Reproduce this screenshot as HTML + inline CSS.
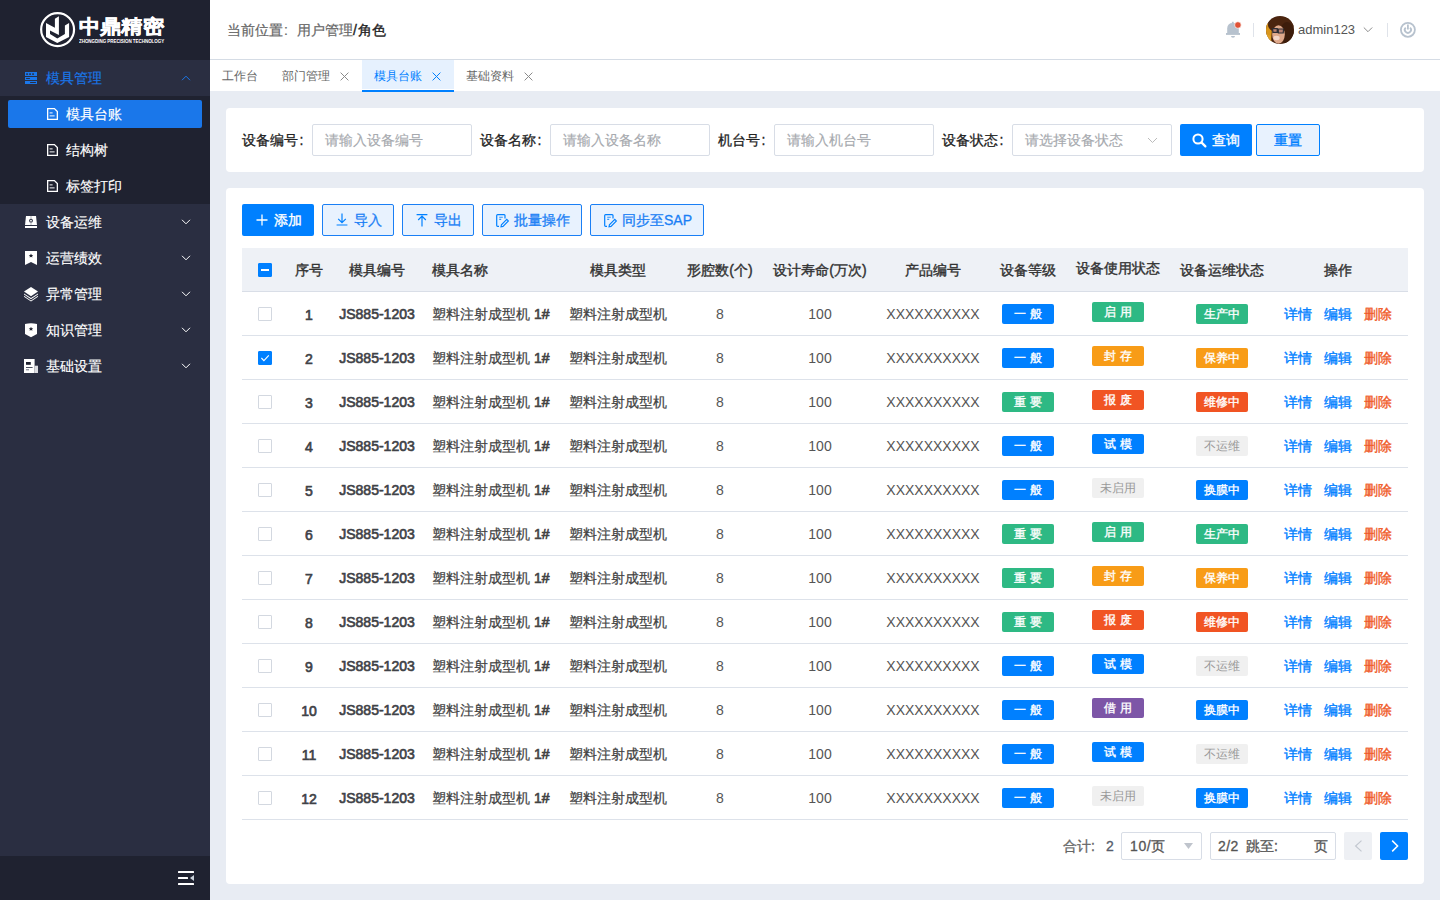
<!DOCTYPE html>
<html><head><meta charset="utf-8"><title>模具台账</title><style>
*{margin:0;padding:0;box-sizing:border-box}
html,body{width:1440px;height:900px;overflow:hidden}
body{font-family:"Liberation Sans",sans-serif;background:#e8ecf3;position:relative;font-size:14px;color:#333}
.a{position:absolute}
svg{display:block}
#side{left:0;top:0;width:210px;height:900px;background:#2a2e41}
#logo{left:0;top:0;width:210px;height:60px;background:#1f2230}
.mi{position:absolute;left:0;width:210px;height:36px;color:#fff;font-size:14px;line-height:36px;white-space:nowrap}
.mi .t{position:absolute;left:46px;top:0;-webkit-text-stroke:0.15px currentColor}
.mi svg.ic{position:absolute;left:25px;top:12px}
.mi svg.ch{position:absolute;left:180px;top:14px}
.sub{background:#1f2230}
.sub .t{left:66px}
.sub svg.ic{left:46.5px;top:11.5px}
#hdr{left:210px;top:0;width:1230px;height:60px;background:#fff;border-bottom:1px solid #d5dce5}
#tabs{left:210px;top:60px;width:1230px;height:31px;background:#fff}
.tab{position:absolute;top:1px;height:31px;line-height:31px;font-size:12px;color:#666;white-space:nowrap}
.card{position:absolute;background:#fff;border-radius:4px}
.lbl{position:absolute;top:124px;height:32px;line-height:32px;color:#222;-webkit-text-stroke:0.28px #222;white-space:nowrap}
.inp{position:absolute;top:124px;height:32px;width:160px;border:1px solid #d8dde6;border-radius:2px;line-height:30px;padding-left:12px;color:#a6a9ae;font-size:14px;-webkit-text-stroke:0.15px currentColor;white-space:nowrap}
.btn{position:absolute;top:204px;height:32px;line-height:30px;border:1px solid #1a7ff5;background:#e8f2fe;color:#1a7ff5;border-radius:2px;font-size:14px;-webkit-text-stroke:0.3px currentColor;white-space:nowrap}
.btn svg{position:absolute;top:9px}
.btn .t{position:absolute;top:0}
#thead{left:242px;top:248px;width:1166px;height:44px;background:#eef1f6;border-bottom:1px solid #d9dee7}
.th{position:absolute;top:1px;line-height:43px;color:#333;-webkit-text-stroke:0.4px #333;white-space:nowrap;transform:translateX(-50%)}
.tr{position:absolute;left:242px;width:1166px;height:44px;border-bottom:1px solid #dde2ea}
.td{position:absolute;top:1px;line-height:43px;white-space:nowrap;transform:translateX(-50%);color:#444}
.cb{position:absolute;left:16px;top:15px;width:14px;height:14px;border:1px solid #d3d8e0;border-radius:1px;background:#fff}
.tag{position:absolute;width:52px;height:20px;line-height:20px;border-radius:2px;color:#fff;font-size:12px;text-align:center;-webkit-text-stroke:0.35px currentColor}
.g{background:#2eb984}.b{background:#0080ff}.o{background:#f89c17}.r{background:#f15423}.p{background:#7d56a7}.x{background:#f0f0f0;color:#999;-webkit-text-stroke:0}
.md{-webkit-text-stroke:0.22px #444}
.op{position:absolute;top:1px;line-height:43px;color:#0080ff;-webkit-text-stroke:0.35px currentColor;white-space:nowrap}
</style></head><body>
<div id="side" class="a">
<div id="logo" class="a"><svg class="a" style="left:38px;top:10px" width="40" height="40" viewBox="0 0 40 40"><circle cx="19.6" cy="19.6" r="16.45" fill="none" stroke="#fff" stroke-width="2.2"/><path d="M8 13.1 L16.9 17.8 V8.7 L20.9 6.2 V24.9 L12 20.4 V24 L19.3 28.4 L26.9 24 V15.5 L31.1 13.1 V26.9 L19.3 33.1 L8 26.9 Z" fill="#fff"/></svg><div class="a" style="left:79px;top:14px;font-size:21px;font-weight:bold;color:#fff;letter-spacing:0.2px;line-height:26px;-webkit-text-stroke:0.6px #fff;transform:scaleY(0.9);transform-origin:0 13px">中鼎精密</div><div class="a" style="left:79px;top:38px;font-size:5px;font-weight:bold;color:#fff;line-height:6px;letter-spacing:-0.05px;white-space:nowrap;transform:scaleX(0.9);transform-origin:0 0">ZHONGDING PRECISION TECHNOLOGY</div></div>
<div class="mi" style="top:60px;color:#1a77ea"><svg class="ic" width="12" height="12" viewBox="0 0 12 12" fill="#1a77ea"><rect x="0" y="0" width="12" height="4"/><rect x="0" y="5" width="12" height="3"/><rect x="0" y="9" width="12" height="3"/><g fill="#2a2e41"><rect x="1.2" y="1.2" width="1.7" height="1.7" rx="0.4"/><rect x="4.2" y="1.2" width="1.7" height="1.7" rx="0.4"/><rect x="7.2" y="1.2" width="1.7" height="1.7" rx="0.4"/><rect x="1" y="6" width="4" height="1" rx="0.5"/><rect x="5" y="10" width="6" height="1" rx="0.5"/></g></svg><span class="t">模具管理</span><svg class="ch" width="12" height="8" viewBox="0 0 12 8"><path d="M2 6.2 L6 2.2 L10 6.2" fill="none" stroke="#1a77ea" stroke-width="1"/></svg></div>
<div class="mi sub" style="top:96px"><div class="a" style="left:8px;top:4px;width:194px;height:28px;background:#1a77ea;border-radius:2px"></div><svg class="ic" width="12" height="13" viewBox="0 0 12 13"><path d="M0.65 0.65 H7.4 L10.35 3.6 V11.35 H0.65 Z" fill="none" stroke="#fff" stroke-width="1.3"/><rect x="2.6" y="4.2" width="3" height="1.3" fill="#fff" opacity="0.75"/><rect x="2.6" y="7.2" width="5" height="1.3" fill="#fff" opacity="0.75"/></svg><span class="t">模具台账</span></div>
<div class="mi sub" style="top:132px"><svg class="ic" width="12" height="13" viewBox="0 0 12 13"><path d="M0.65 0.65 H7.4 L10.35 3.6 V11.35 H0.65 Z" fill="none" stroke="#fff" stroke-width="1.3"/><rect x="2.6" y="4.2" width="3" height="1.3" fill="#fff" opacity="0.75"/><rect x="2.6" y="7.2" width="5" height="1.3" fill="#fff" opacity="0.75"/></svg><span class="t">结构树</span></div>
<div class="mi sub" style="top:168px"><svg class="ic" width="12" height="13" viewBox="0 0 12 13"><path d="M0.65 0.65 H7.4 L10.35 3.6 V11.35 H0.65 Z" fill="none" stroke="#fff" stroke-width="1.3"/><rect x="2.6" y="4.2" width="3" height="1.3" fill="#fff" opacity="0.75"/><rect x="2.6" y="7.2" width="5" height="1.3" fill="#fff" opacity="0.75"/></svg><span class="t">标签打印</span></div>
<div class="mi" style="top:204px"><svg class="ic" style="top:12px" width="12" height="12" viewBox="0 0 12 12"><path d="M1 0 H11 L12 9 H0 Z" fill="#fff"/><rect x="5.5" y="0" width="1" height="9" fill="#2a2e41" opacity="0.35"/><circle cx="6" cy="4.7" r="1.9" fill="#2a2e41"/><circle cx="6" cy="4.7" r="0.9" fill="#fff"/><rect x="0" y="10" width="12" height="2" fill="#fff"/></svg><span class="t">设备运维</span><svg class="ch" width="12" height="8" viewBox="0 0 12 8"><path d="M2 1.8 L6 5.8 L10 1.8" fill="none" stroke="#fff" stroke-width="1"/></svg></div>
<div class="mi" style="top:240px"><svg class="ic" style="top:11px" width="12" height="14" viewBox="0 0 12 14"><path d="M0 0 H12 V14 L6 11 L0 14 Z" fill="#fff"/><path d="M6 2.6 L6.7 4 L8.2 4.1 L7.1 5.1 L7.4 6.6 L6 5.8 L4.6 6.6 L4.9 5.1 L3.8 4.1 L5.3 4 Z" fill="#1f2230"/></svg><span class="t">运营绩效</span><svg class="ch" width="12" height="8" viewBox="0 0 12 8"><path d="M2 1.8 L6 5.8 L10 1.8" fill="none" stroke="#fff" stroke-width="1"/></svg></div>
<div class="mi" style="top:276px"><svg class="ic" style="left:24px;top:11px" width="14" height="15" viewBox="0 0 14 15"><path d="M7 0 L14 4.6 L7 9.2 L0 4.6 Z" fill="#fff"/><path d="M0 6.4 L7 11 L14 6.4 V7.6 L7 12.2 L0 7.6 Z" fill="#fff"/><path d="M0 8.8 L7 13.4 L14 8.8 V9.8 L7 14.4 L0 9.8 Z" fill="#fff"/></svg><span class="t">异常管理</span><svg class="ch" width="12" height="8" viewBox="0 0 12 8"><path d="M2 1.8 L6 5.8 L10 1.8" fill="none" stroke="#fff" stroke-width="1"/></svg></div>
<div class="mi" style="top:312px"><svg class="ic" style="top:11px" width="12" height="15" viewBox="0 0 12 15"><path d="M0 1 Q6 -0.5 12 1 V11 L6 14.2 L0 11 Z" fill="#fff"/><path d="M6 3.8 L6.7 5.2 L8.2 5.3 L7.1 6.3 L7.4 7.8 L6 7 L4.6 7.8 L4.9 6.3 L3.8 5.3 L5.3 5.2 Z" fill="#1f2230"/></svg><span class="t">知识管理</span><svg class="ch" width="12" height="8" viewBox="0 0 12 8"><path d="M2 1.8 L6 5.8 L10 1.8" fill="none" stroke="#fff" stroke-width="1"/></svg></div>
<div class="mi" style="top:348px"><svg class="ic" style="left:24px;top:11px" width="14" height="14" viewBox="0 0 14 14"><rect x="0" y="0" width="10.6" height="14" fill="#fff"/><rect x="10.6" y="6.7" width="3.4" height="7.3" fill="#dcdde2"/><rect x="2" y="3" width="4.8" height="2.8" fill="#1f2230"/><rect x="2" y="8" width="6.6" height="1" fill="#4a4e5e"/><rect x="2" y="10" width="3" height="1.4" fill="#9a9ca6"/></svg><span class="t">基础设置</span><svg class="ch" width="12" height="8" viewBox="0 0 12 8"><path d="M2 1.8 L6 5.8 L10 1.8" fill="none" stroke="#fff" stroke-width="1"/></svg></div>
<div class="a" style="left:0;top:856px;width:210px;height:44px;background:#1f2230"><svg class="a" style="left:177px;top:14px" width="18" height="16" viewBox="0 0 18 16"><rect x="1" y="1" width="16" height="2" rx="0.5" fill="#fff"/><rect x="1" y="7" width="10" height="2" rx="0.5" fill="#fff"/><rect x="1" y="13" width="16" height="2" rx="0.5" fill="#fff"/><path d="M17 5 L13 8 L17 11 Z" fill="#c9d1da"/></svg></div>
</div>
<div id="hdr" class="a"><div class="a" style="left:17px;top:0;line-height:60px;color:#666;white-space:nowrap;-webkit-text-stroke:0.2px #666">当前位置<span style="display:inline-block;width:14px;padding-left:1px">:</span>用户管理<span style="color:#222;-webkit-text-stroke:0.35px #222">/<span style="margin-left:1.5px">角色</span></span></div><svg class="a" style="left:1015px;top:21px" width="17" height="18" viewBox="0 0 17 18"><rect x="6.9" y="0.8" width="1.8" height="2" fill="#b7c2ce"/><path d="M2.2 12.2 V7.6 Q2.2 2 7.8 2 Q13.8 2 13.8 7.6 V12.2 Z" fill="#b7c2ce"/><rect x="1" y="12" width="14" height="1.9" fill="#b7c2ce"/><path d="M6 15 H10 Q10 16.8 8 16.8 Q6 16.8 6 15 Z" fill="#b7c2ce"/><circle cx="12.9" cy="4" r="3.3" fill="#e05236" stroke="#fff" stroke-width="0.7"/></svg><div class="a" style="left:1043px;top:23px;width:1px;height:14px;background:#dfe3ea"></div><svg class="a" style="left:1056px;top:16px" width="28" height="28" viewBox="0 0 28 28"><defs><clipPath id="cav"><circle cx="14" cy="14" r="14"/></clipPath></defs><g clip-path="url(#cav)"><rect width="28" height="28" fill="#4a2410"/><path d="M0 8 Q3 6 6 10 L5 28 H0 Z" fill="#d9961c"/><ellipse cx="15" cy="9" rx="13" ry="8" fill="#4b250f"/><ellipse cx="21" cy="17" rx="7" ry="11" fill="#3d1d0b"/><ellipse cx="12.5" cy="18.5" rx="6.3" ry="9.2" fill="#dfa88a"/><ellipse cx="10.5" cy="22" rx="3.2" ry="2.2" fill="#f4d6c8"/><path d="M6.5 12.6 H11.2 V16.4 H7 Z M12.2 13 H17.6 L17.2 17 H12.4 Z" fill="#b88070" stroke="#2e2e34" stroke-width="1.2"/><rect x="11" y="13.4" width="1.4" height="1" fill="#2e2e34"/><path d="M5 20 Q4 26 8 28 H0 V18 Z" fill="#e0a22a"/></g></svg><div class="a" style="left:1088px;top:0;line-height:60px;font-size:13px;color:#555;white-space:nowrap">admin123</div><svg class="a" style="left:1152px;top:26px" width="12" height="8" viewBox="0 0 12 8"><path d="M1.8 1.5 L6 5.7 L10.2 1.5" fill="none" stroke="#8c8c8c" stroke-width="1"/></svg><div class="a" style="left:1177px;top:23px;width:1px;height:14px;background:#dfe3ea"></div><svg class="a" style="left:1189px;top:21px" width="18" height="18" viewBox="0 0 18 18"><circle cx="8.9" cy="8.8" r="7" fill="none" stroke="#b7c2ce" stroke-width="1.8"/><path d="M8.9 3.4 V8.4" stroke="#b7c2ce" stroke-width="1.8"/><path d="M6.7 6.6 A3.1 3.1 0 1 0 11.1 6.6" fill="none" stroke="#b7c2ce" stroke-width="1.8"/></svg></div>
<div id="tabs" class="a"><div class="tab" style="left:12px;top:1px">工作台</div><div class="tab" style="left:72px">部门管理</div><svg class="a" style="left:130px;top:12px" width="9" height="9" viewBox="0 0 9 9"><path d="M0.6 0.6 L8.4 8.4 M8.4 0.6 L0.6 8.4" stroke="#8a8a8a" stroke-width="1"/></svg><div class="a" style="left:152px;top:0;width:92px;height:29px;background:#e6f1fe"></div><div class="a" style="left:152px;top:30px;width:92px;height:2px;background:#0080ff;z-index:2"></div><div class="tab" style="left:164px;color:#0080ff">模具台账</div><svg class="a" style="left:222px;top:12px" width="9" height="9" viewBox="0 0 9 9"><path d="M0.6 0.6 L8.4 8.4 M8.4 0.6 L0.6 8.4" stroke="#0080ff" stroke-width="1"/></svg><div class="tab" style="left:256px">基础资料</div><svg class="a" style="left:314px;top:12px" width="9" height="9" viewBox="0 0 9 9"><path d="M0.6 0.6 L8.4 8.4 M8.4 0.6 L0.6 8.4" stroke="#8a8a8a" stroke-width="1"/></svg></div>
<div class="card" style="left:226px;top:108px;width:1198px;height:64px"></div>
<div class="lbl" style="left:242px">设备编号<span style="display:inline-block;width:14px;padding-left:1.5px">:</span></div><div class="inp" style="left:312px">请输入设备编号</div>
<div class="lbl" style="left:480px">设备名称<span style="display:inline-block;width:14px;padding-left:1.5px">:</span></div><div class="inp" style="left:550px">请输入设备名称</div>
<div class="lbl" style="left:718px">机台号<span style="display:inline-block;width:14px;padding-left:1.5px">:</span></div><div class="inp" style="left:774px">请输入机台号</div>
<div class="lbl" style="left:942px">设备状态<span style="display:inline-block;width:14px;padding-left:1.5px">:</span></div><div class="inp" style="left:1012px">请选择设备状态<svg class="a" style="left:134px;top:12px" width="11" height="7" viewBox="0 0 11 7"><path d="M1 1 L5.5 5.5 L10 1" fill="none" stroke="#bbb" stroke-width="1"/></svg></div>
<div class="a" style="left:1180px;top:124px;width:72px;height:32px;background:#0080ff;border-radius:2px;color:#fff;-webkit-text-stroke:0.35px #fff;line-height:32px"><svg class="a" style="left:12px;top:9px" width="15" height="15" viewBox="0 0 15 15"><circle cx="6" cy="6" r="4.6" fill="none" stroke="#fff" stroke-width="2"/><path d="M9.4 9.4 L13.4 13.4" stroke="#fff" stroke-width="2.2" stroke-linecap="round"/></svg><span class="a" style="left:32px;top:0">查询</span></div>
<div class="a" style="left:1256px;top:124px;width:64px;height:32px;background:#e8f2fe;border:1px solid #0080ff;border-radius:2px;color:#0080ff;-webkit-text-stroke:0.35px currentColor;line-height:30px;text-align:center">重置</div>
<div class="card" style="left:226px;top:188px;width:1198px;height:696px"></div>
<div class="a" style="left:242px;top:204px;width:72px;height:32px;background:#0080ff;border-radius:2px;color:#fff;-webkit-text-stroke:0.35px #fff;line-height:32px"><svg class="a" style="left:14px;top:10px" width="12" height="12" viewBox="0 0 12 12"><path d="M6 0.5 V11.5 M0.5 6 H11.5" stroke="#fff" stroke-width="1.3"/></svg><span class="a" style="left:32px;top:0">添加</span></div>
<div class="btn" style="left:322px;width:72px"><svg style="left:13px;top:7.5px" width="12" height="13" viewBox="0 0 12 13"><path d="M6 0.5 V9.6 M2.2 5.8 L6 9.6 L9.8 5.8 M0.6 12 H11.4" fill="none" stroke="#0080ff" stroke-width="1.2"/></svg><span class="t" style="left:30.5px">导入</span></div>
<div class="btn" style="left:402px;width:72px"><svg style="left:13px;top:8.5px" width="12" height="13" viewBox="0 0 12 13"><path d="M6 12.4 V2.2 M2.2 6 L6 2.2 L9.8 6 M0.6 0.6 H11.4" fill="none" stroke="#0080ff" stroke-width="1.2"/></svg><span class="t" style="left:30.5px">导出</span></div>
<div class="btn" style="left:482px;width:100px"><svg style="left:13px;top:8.5px" width="14" height="14" viewBox="0 0 14 14"><path d="M9 4.4 V1.6 Q9 0.7 8.1 0.7 H1.6 Q0.7 0.7 0.7 1.6 V11.6 Q0.7 12.4 1.6 12.4 H3" fill="none" stroke="#0080ff" stroke-width="1.2"/><path d="M3.2 3.2 H6.8 M3.2 5.4 H5.2" stroke="#0080ff" stroke-width="1.1" opacity="0.8"/><path d="M5 12.8 L5.4 10.8 L10.8 5.4 L12.4 7 L7 12.4 Z" fill="none" stroke="#0080ff" stroke-width="1.1"/></svg><span class="t" style="left:31px">批量操作</span></div>
<div class="btn" style="left:590px;width:114px"><svg style="left:13px;top:8.5px" width="14" height="14" viewBox="0 0 14 14"><path d="M9 4.4 V1.6 Q9 0.7 8.1 0.7 H1.6 Q0.7 0.7 0.7 1.6 V11.6 Q0.7 12.4 1.6 12.4 H3" fill="none" stroke="#0080ff" stroke-width="1.2"/><path d="M3.2 3.2 H6.8 M3.2 5.4 H5.2" stroke="#0080ff" stroke-width="1.1" opacity="0.8"/><path d="M5 12.8 L5.4 10.8 L10.8 5.4 L12.4 7 L7 12.4 Z" fill="none" stroke="#0080ff" stroke-width="1.1"/></svg><span class="t" style="left:31px">同步至SAP</span></div>
<div id="thead" class="a"><div class="cb" style="background:#0080ff;border-color:#0080ff"><div class="a" style="left:2px;top:5px;width:8px;height:2px;background:#fff"></div></div><div class="th" style="left:67px">序号</div><div class="th" style="left:135px">模具编号</div><div class="th" style="left:190px;transform:none">模具名称</div><div class="th" style="left:376px">模具类型</div><div class="th" style="left:478px">形腔数(个)</div><div class="th" style="left:578px">设计寿命(万次)</div><div class="th" style="left:691px">产品编号</div><div class="th" style="left:786px">设备等级</div><div class="th" style="left:876px;top:-1px">设备使用状态</div><div class="th" style="left:980px">设备运维状态</div><div class="th" style="left:1096px">操作</div></div>
<div class="tr" style="top:292px"><div class="cb"></div><div class="td" style="left:67px;top:2px;-webkit-text-stroke:0.65px #3f4247;color:#3f4247">1</div><div class="td" style="left:135px;-webkit-text-stroke:0.65px #3f4247;color:#3f4247">JS885-1203</div><div class="td" style="left:190px;transform:none"><span class="md">塑料注射成型机</span> <span style="-webkit-text-stroke:0.6px #444">1#</span></div><div class="td md" style="left:376px">塑料注射成型机</div><div class="td" style="left:478px;color:#555">8</div><div class="td" style="left:578px;color:#555">100</div><div class="td" style="left:691px;color:#555">XXXXXXXXXX</div><div class="tag b" style="left:760px;top:12px">一 般</div><div class="tag g" style="left:850px;top:10px">启 用</div><div class="tag g" style="left:954px;top:12px">生产中</div><div class="op" style="left:1042px">详情</div><div class="op" style="left:1082px">编辑</div><div class="op" style="left:1122px;color:#f05a28">删除</div></div>
<div class="tr" style="top:336px"><div class="cb" style="background:#0080ff;border-color:#0080ff"><svg class="a" style="left:1px;top:1px" width="10" height="10" viewBox="0 0 10 10"><path d="M1.4 5 L3.9 7.6 L8.8 2.4" fill="none" stroke="#fff" stroke-width="1.1"/></svg></div><div class="td" style="left:67px;top:2px;-webkit-text-stroke:0.65px #3f4247;color:#3f4247">2</div><div class="td" style="left:135px;-webkit-text-stroke:0.65px #3f4247;color:#3f4247">JS885-1203</div><div class="td" style="left:190px;transform:none"><span class="md">塑料注射成型机</span> <span style="-webkit-text-stroke:0.6px #444">1#</span></div><div class="td md" style="left:376px">塑料注射成型机</div><div class="td" style="left:478px;color:#555">8</div><div class="td" style="left:578px;color:#555">100</div><div class="td" style="left:691px;color:#555">XXXXXXXXXX</div><div class="tag b" style="left:760px;top:12px">一 般</div><div class="tag o" style="left:850px;top:10px">封 存</div><div class="tag o" style="left:954px;top:12px">保养中</div><div class="op" style="left:1042px">详情</div><div class="op" style="left:1082px">编辑</div><div class="op" style="left:1122px;color:#f05a28">删除</div></div>
<div class="tr" style="top:380px"><div class="cb"></div><div class="td" style="left:67px;top:2px;-webkit-text-stroke:0.65px #3f4247;color:#3f4247">3</div><div class="td" style="left:135px;-webkit-text-stroke:0.65px #3f4247;color:#3f4247">JS885-1203</div><div class="td" style="left:190px;transform:none"><span class="md">塑料注射成型机</span> <span style="-webkit-text-stroke:0.6px #444">1#</span></div><div class="td md" style="left:376px">塑料注射成型机</div><div class="td" style="left:478px;color:#555">8</div><div class="td" style="left:578px;color:#555">100</div><div class="td" style="left:691px;color:#555">XXXXXXXXXX</div><div class="tag g" style="left:760px;top:12px">重 要</div><div class="tag r" style="left:850px;top:10px">报 废</div><div class="tag r" style="left:954px;top:12px">维修中</div><div class="op" style="left:1042px">详情</div><div class="op" style="left:1082px">编辑</div><div class="op" style="left:1122px;color:#f05a28">删除</div></div>
<div class="tr" style="top:424px"><div class="cb"></div><div class="td" style="left:67px;top:2px;-webkit-text-stroke:0.65px #3f4247;color:#3f4247">4</div><div class="td" style="left:135px;-webkit-text-stroke:0.65px #3f4247;color:#3f4247">JS885-1203</div><div class="td" style="left:190px;transform:none"><span class="md">塑料注射成型机</span> <span style="-webkit-text-stroke:0.6px #444">1#</span></div><div class="td md" style="left:376px">塑料注射成型机</div><div class="td" style="left:478px;color:#555">8</div><div class="td" style="left:578px;color:#555">100</div><div class="td" style="left:691px;color:#555">XXXXXXXXXX</div><div class="tag b" style="left:760px;top:12px">一 般</div><div class="tag b" style="left:850px;top:10px">试 模</div><div class="tag x" style="left:954px;top:12px">不运维</div><div class="op" style="left:1042px">详情</div><div class="op" style="left:1082px">编辑</div><div class="op" style="left:1122px;color:#f05a28">删除</div></div>
<div class="tr" style="top:468px"><div class="cb"></div><div class="td" style="left:67px;top:2px;-webkit-text-stroke:0.65px #3f4247;color:#3f4247">5</div><div class="td" style="left:135px;-webkit-text-stroke:0.65px #3f4247;color:#3f4247">JS885-1203</div><div class="td" style="left:190px;transform:none"><span class="md">塑料注射成型机</span> <span style="-webkit-text-stroke:0.6px #444">1#</span></div><div class="td md" style="left:376px">塑料注射成型机</div><div class="td" style="left:478px;color:#555">8</div><div class="td" style="left:578px;color:#555">100</div><div class="td" style="left:691px;color:#555">XXXXXXXXXX</div><div class="tag b" style="left:760px;top:12px">一 般</div><div class="tag x" style="left:850px;top:10px">未启用</div><div class="tag b" style="left:954px;top:12px">换膜中</div><div class="op" style="left:1042px">详情</div><div class="op" style="left:1082px">编辑</div><div class="op" style="left:1122px;color:#f05a28">删除</div></div>
<div class="tr" style="top:512px"><div class="cb"></div><div class="td" style="left:67px;top:2px;-webkit-text-stroke:0.65px #3f4247;color:#3f4247">6</div><div class="td" style="left:135px;-webkit-text-stroke:0.65px #3f4247;color:#3f4247">JS885-1203</div><div class="td" style="left:190px;transform:none"><span class="md">塑料注射成型机</span> <span style="-webkit-text-stroke:0.6px #444">1#</span></div><div class="td md" style="left:376px">塑料注射成型机</div><div class="td" style="left:478px;color:#555">8</div><div class="td" style="left:578px;color:#555">100</div><div class="td" style="left:691px;color:#555">XXXXXXXXXX</div><div class="tag g" style="left:760px;top:12px">重 要</div><div class="tag g" style="left:850px;top:10px">启 用</div><div class="tag g" style="left:954px;top:12px">生产中</div><div class="op" style="left:1042px">详情</div><div class="op" style="left:1082px">编辑</div><div class="op" style="left:1122px;color:#f05a28">删除</div></div>
<div class="tr" style="top:556px"><div class="cb"></div><div class="td" style="left:67px;top:2px;-webkit-text-stroke:0.65px #3f4247;color:#3f4247">7</div><div class="td" style="left:135px;-webkit-text-stroke:0.65px #3f4247;color:#3f4247">JS885-1203</div><div class="td" style="left:190px;transform:none"><span class="md">塑料注射成型机</span> <span style="-webkit-text-stroke:0.6px #444">1#</span></div><div class="td md" style="left:376px">塑料注射成型机</div><div class="td" style="left:478px;color:#555">8</div><div class="td" style="left:578px;color:#555">100</div><div class="td" style="left:691px;color:#555">XXXXXXXXXX</div><div class="tag g" style="left:760px;top:12px">重 要</div><div class="tag o" style="left:850px;top:10px">封 存</div><div class="tag o" style="left:954px;top:12px">保养中</div><div class="op" style="left:1042px">详情</div><div class="op" style="left:1082px">编辑</div><div class="op" style="left:1122px;color:#f05a28">删除</div></div>
<div class="tr" style="top:600px"><div class="cb"></div><div class="td" style="left:67px;top:2px;-webkit-text-stroke:0.65px #3f4247;color:#3f4247">8</div><div class="td" style="left:135px;-webkit-text-stroke:0.65px #3f4247;color:#3f4247">JS885-1203</div><div class="td" style="left:190px;transform:none"><span class="md">塑料注射成型机</span> <span style="-webkit-text-stroke:0.6px #444">1#</span></div><div class="td md" style="left:376px">塑料注射成型机</div><div class="td" style="left:478px;color:#555">8</div><div class="td" style="left:578px;color:#555">100</div><div class="td" style="left:691px;color:#555">XXXXXXXXXX</div><div class="tag g" style="left:760px;top:12px">重 要</div><div class="tag r" style="left:850px;top:10px">报 废</div><div class="tag r" style="left:954px;top:12px">维修中</div><div class="op" style="left:1042px">详情</div><div class="op" style="left:1082px">编辑</div><div class="op" style="left:1122px;color:#f05a28">删除</div></div>
<div class="tr" style="top:644px"><div class="cb"></div><div class="td" style="left:67px;top:2px;-webkit-text-stroke:0.65px #3f4247;color:#3f4247">9</div><div class="td" style="left:135px;-webkit-text-stroke:0.65px #3f4247;color:#3f4247">JS885-1203</div><div class="td" style="left:190px;transform:none"><span class="md">塑料注射成型机</span> <span style="-webkit-text-stroke:0.6px #444">1#</span></div><div class="td md" style="left:376px">塑料注射成型机</div><div class="td" style="left:478px;color:#555">8</div><div class="td" style="left:578px;color:#555">100</div><div class="td" style="left:691px;color:#555">XXXXXXXXXX</div><div class="tag b" style="left:760px;top:12px">一 般</div><div class="tag b" style="left:850px;top:10px">试 模</div><div class="tag x" style="left:954px;top:12px">不运维</div><div class="op" style="left:1042px">详情</div><div class="op" style="left:1082px">编辑</div><div class="op" style="left:1122px;color:#f05a28">删除</div></div>
<div class="tr" style="top:688px"><div class="cb"></div><div class="td" style="left:67px;top:2px;-webkit-text-stroke:0.65px #3f4247;color:#3f4247">10</div><div class="td" style="left:135px;-webkit-text-stroke:0.65px #3f4247;color:#3f4247">JS885-1203</div><div class="td" style="left:190px;transform:none"><span class="md">塑料注射成型机</span> <span style="-webkit-text-stroke:0.6px #444">1#</span></div><div class="td md" style="left:376px">塑料注射成型机</div><div class="td" style="left:478px;color:#555">8</div><div class="td" style="left:578px;color:#555">100</div><div class="td" style="left:691px;color:#555">XXXXXXXXXX</div><div class="tag b" style="left:760px;top:12px">一 般</div><div class="tag p" style="left:850px;top:10px">借 用</div><div class="tag b" style="left:954px;top:12px">换膜中</div><div class="op" style="left:1042px">详情</div><div class="op" style="left:1082px">编辑</div><div class="op" style="left:1122px;color:#f05a28">删除</div></div>
<div class="tr" style="top:732px"><div class="cb"></div><div class="td" style="left:67px;top:2px;-webkit-text-stroke:0.65px #3f4247;color:#3f4247">11</div><div class="td" style="left:135px;-webkit-text-stroke:0.65px #3f4247;color:#3f4247">JS885-1203</div><div class="td" style="left:190px;transform:none"><span class="md">塑料注射成型机</span> <span style="-webkit-text-stroke:0.6px #444">1#</span></div><div class="td md" style="left:376px">塑料注射成型机</div><div class="td" style="left:478px;color:#555">8</div><div class="td" style="left:578px;color:#555">100</div><div class="td" style="left:691px;color:#555">XXXXXXXXXX</div><div class="tag b" style="left:760px;top:12px">一 般</div><div class="tag b" style="left:850px;top:10px">试 模</div><div class="tag x" style="left:954px;top:12px">不运维</div><div class="op" style="left:1042px">详情</div><div class="op" style="left:1082px">编辑</div><div class="op" style="left:1122px;color:#f05a28">删除</div></div>
<div class="tr" style="top:776px"><div class="cb"></div><div class="td" style="left:67px;top:2px;-webkit-text-stroke:0.65px #3f4247;color:#3f4247">12</div><div class="td" style="left:135px;-webkit-text-stroke:0.65px #3f4247;color:#3f4247">JS885-1203</div><div class="td" style="left:190px;transform:none"><span class="md">塑料注射成型机</span> <span style="-webkit-text-stroke:0.6px #444">1#</span></div><div class="td md" style="left:376px">塑料注射成型机</div><div class="td" style="left:478px;color:#555">8</div><div class="td" style="left:578px;color:#555">100</div><div class="td" style="left:691px;color:#555">XXXXXXXXXX</div><div class="tag b" style="left:760px;top:12px">一 般</div><div class="tag x" style="left:850px;top:10px">未启用</div><div class="tag b" style="left:954px;top:12px">换膜中</div><div class="op" style="left:1042px">详情</div><div class="op" style="left:1082px">编辑</div><div class="op" style="left:1122px;color:#f05a28">删除</div></div>
<div class="a" style="left:1063px;top:832px;line-height:28px;color:#666;white-space:nowrap;-webkit-text-stroke:0.3px currentColor">合计<span style="display:inline-block;width:14px">:</span><span style="color:#565c6b;margin-left:1px">2</span></div>
<div class="a" style="left:1121px;top:832px;width:81px;height:28px;border:1px solid #d8dde6;border-radius:2px;line-height:26px;padding-left:8px;color:#555;white-space:nowrap;-webkit-text-stroke:0.3px currentColor;letter-spacing:0.6px">10/页<svg class="a" style="left:62px;top:10px" width="9" height="6" viewBox="0 0 9 6"><path d="M0 0 H9 L4.5 6 Z" fill="#bfc4cc"/></svg></div>
<div class="a" style="left:1210px;top:832px;width:126px;height:28px;border:1px solid #d8dde6;border-radius:2px;line-height:26px;color:#555;white-space:nowrap;-webkit-text-stroke:0.3px currentColor"><span class="a" style="left:7px;top:0;letter-spacing:0.4px">2/2</span><span class="a" style="left:35px;top:0">跳至<span style="display:inline-block;width:14px">:</span></span><span class="a" style="left:103px;top:0">页</span></div>
<div class="a" style="left:1344px;top:832px;width:28px;height:28px;background:#eef0f4;border-radius:2px"><svg class="a" style="left:10px;top:8px" width="9" height="12" viewBox="0 0 9 12"><path d="M7.5 0.6 L1.6 6 L7.5 11.4" fill="none" stroke="#c3c8d0" stroke-width="1.2"/></svg></div>
<div class="a" style="left:1380px;top:832px;width:28px;height:28px;background:#0080ff;border-radius:2px"><svg class="a" style="left:10.5px;top:8px" width="9" height="12" viewBox="0 0 9 12"><path d="M1.2 0.6 L6.6 6 L1.2 11.4" fill="none" stroke="#fff" stroke-width="1.5"/></svg></div>
</body></html>
